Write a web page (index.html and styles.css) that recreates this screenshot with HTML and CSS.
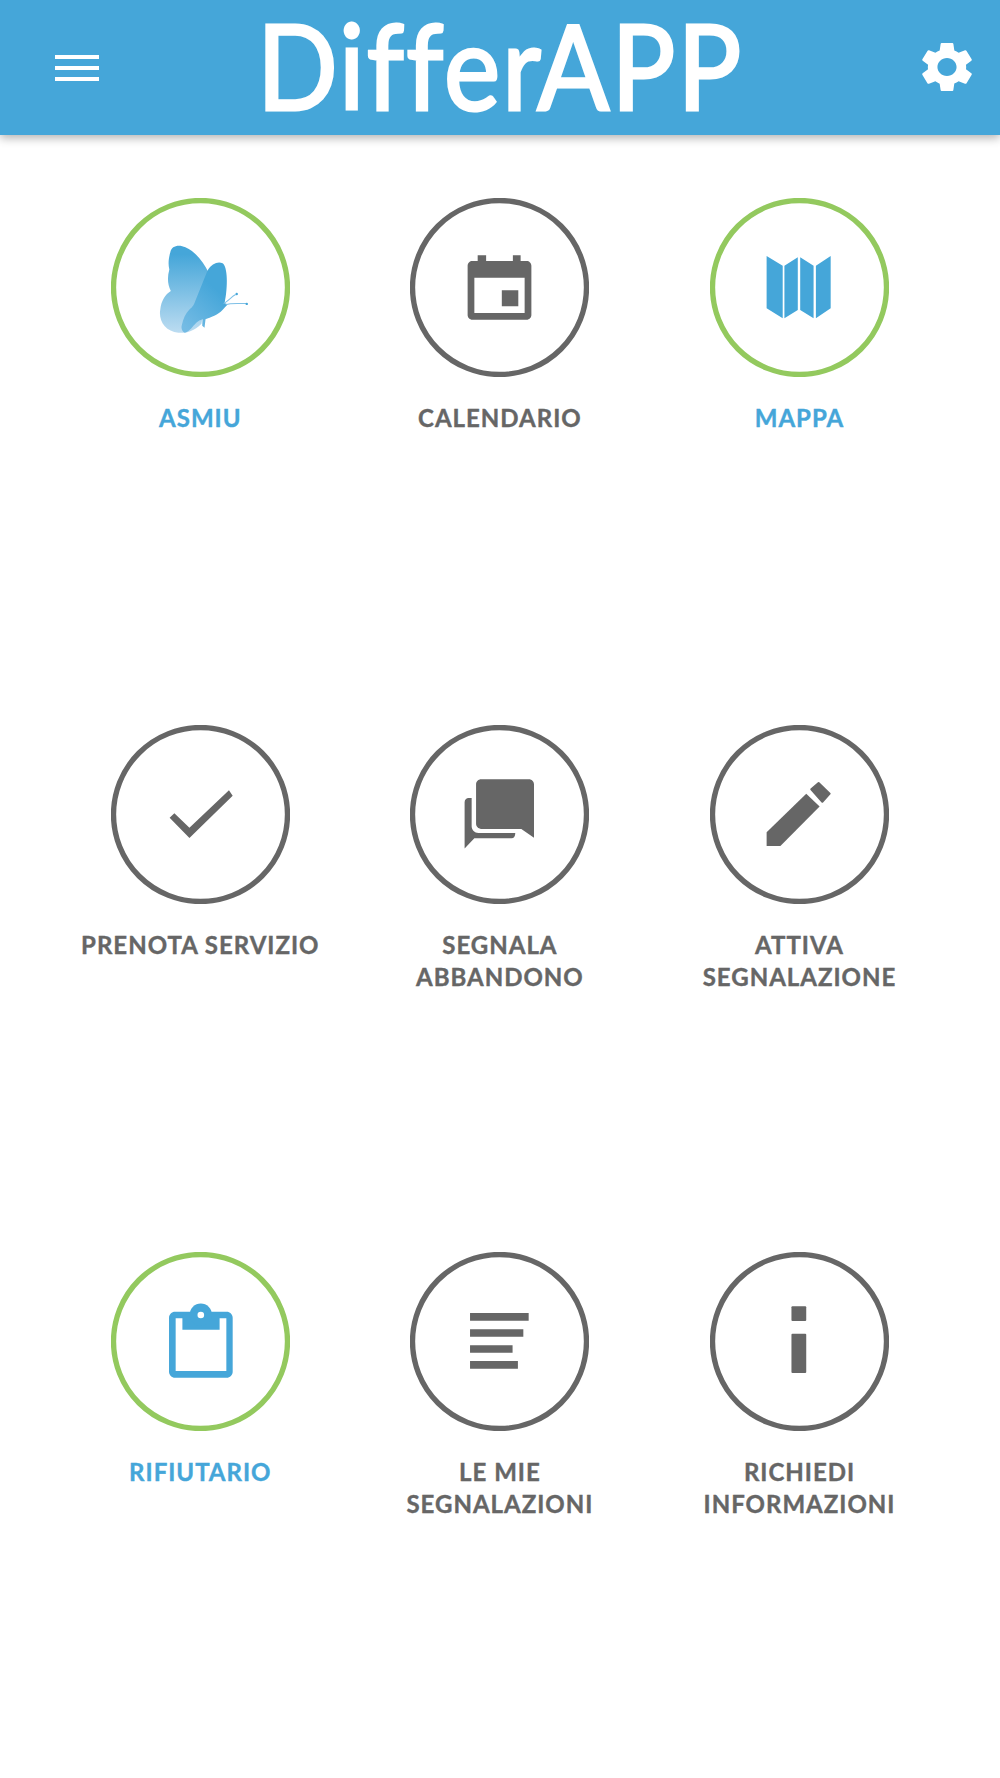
FILE: index.html
```html
<!DOCTYPE html>
<html lang="it">
<head>
<meta charset="utf-8">
<title>DifferAPP</title>
<link rel="stylesheet" href="styles.css">
</head>
<body>
<header class="topbar">
  <button class="menu" aria-label="Menu"><span></span><span></span><span></span></button>
  <h1 class="logo">DifferAPP</h1>
  <svg class="gear" viewBox="2.6 2 18.8 20" preserveAspectRatio="none"><path fill-rule="evenodd" d="M19.14 12.94c.04-.3.06-.61.06-.94 0-.32-.02-.64-.07-.94l2.03-1.58c.18-.14.23-.41.12-.61l-1.92-3.32c-.12-.22-.37-.29-.59-.22l-2.39.96c-.5-.38-1.03-.7-1.62-.94l-.36-2.54c-.04-.24-.24-.41-.48-.41h-3.84c-.24 0-.43.17-.47.41l-.36 2.54c-.59.24-1.13.57-1.62.94l-2.39-.96c-.22-.08-.47 0-.59.22L2.74 8.87c-.12.21-.08.47.12.61l2.03 1.58c-.05.3-.09.63-.09.94s.02.64.07.94l-2.03 1.58c-.18.14-.23.41-.12.61l1.92 3.32c.12.22.37.29.59.22l2.39-.96c.5.38 1.03.7 1.62.94l.36 2.54c.05.24.24.41.48.41h3.84c.24 0 .44-.17.47-.41l.36-2.54c.59-.24 1.13-.56 1.62-.94l2.39.96c.22.08.47 0 .59-.22l1.92-3.32c.12-.22.07-.47-.12-.61l-2.01-1.58zM12 15.6c-1.98 0-3.6-1.62-3.6-3.6s1.62-3.6 3.6-3.6 3.6 1.62 3.6 3.6-1.62 3.6-3.6 3.6z"/></svg>
</header>

<main class="grid">
  <a class="tile tile-on">
    <svg class="disc" viewBox="0 0 178 178">
      <defs>
        <linearGradient id="wingBack" x1="0" y1="0" x2="0" y2="1"><stop offset="0.1" stop-color="#45a6d9"/><stop offset="1" stop-color="#bcdcf1"/></linearGradient>
        <linearGradient id="wingFront" x1="0.6" y1="0.3" x2="0.2" y2="1"><stop offset="0" stop-color="#45a6d9"/><stop offset="1" stop-color="#74bbe4"/></linearGradient>
      </defs>
      <circle class="ring" cx="89" cy="89" r="86.5"/>
      <path fill="url(#wingBack)" d="M59 54C60 47 68 46 74 49C85 54 92 64 97 74L90 125C82 133 74 134.500 67 134C54 133 47 122 49 111C50 102 54 96 59.500 92.500C56 86 56 78 58 71C56.500 65 57.500 59 59 54Z"/>
      <path fill="url(#wingFront)" d="M96 72C100 65 107 62.500 111 65C116 68.500 116.500 88 113 104.500L116 106C112 110 110 113 107 114.500C102 118 97 119 94 120.500L93 129L90.700 127L91 120.500C86 122 84 125 82 127C79 131 76 133.500 73.500 134C70.500 133 69.500 129 70.500 126C72 120 74 115 78 111C80 109 82 108 84 102Z"/>
      <path class="feeler" d="M112 105C117 102 120 98 124 96M114 106C120 104 128 105 135 105"/>
      <circle class="feeler-tip" cx="125" cy="95.500" r="1.200"/>
      <circle class="feeler-tip" cx="135" cy="105.300" r="1.200"/>
    </svg>
    <span class="label">ASMIU</span>
  </a>

  <a class="tile">
    <svg class="disc" viewBox="0 0 178 178">
      <circle class="ring" cx="89" cy="89" r="86.5"/>
      <path class="fill" fill-rule="evenodd" d="M67.300 57H75.700V62.700H102.300V57H110V62.700H116C118.600 62.700 120.700 64.800 120.700 67.400V116.300C120.700 118.900 118.600 121 116 121H62C59.400 121 57.300 118.900 57.300 116.300V67.400C57.300 64.800 59.400 62.700 62 62.700H67.300ZM64 79.300V114.300H114V79.300ZM91.300 91.700H107.700V107.700H91.300Z"/>
    </svg>
    <span class="label">CALENDARIO</span>
  </a>

  <a class="tile tile-on">
    <svg class="disc" viewBox="0 0 178 178">
      <circle class="ring" cx="89" cy="89" r="86.5"/>
      <path class="fill" d="M56.300 57.700L72.300 67.300V119.700L56.300 109.700ZM74 67.300L87.300 59V111.300L74 119.700ZM89.700 59L103 67.300V119.700L89.700 111.300ZM105.300 67.300L120 57.700V109.700L105.300 119.700Z"/>
    </svg>
    <span class="label">MAPPA</span>
  </a>

  <a class="tile">
    <svg class="disc" viewBox="0 0 178 178">
      <circle class="ring" cx="89" cy="89" r="86.5"/>
      <path class="fill" d="M58.300 92.300L63 87.700L78 102.300L117.300 65L121 70.300L78 112.300Z"/>
    </svg>
    <span class="label">PRENOTA SERVIZIO</span>
  </a>

  <a class="tile">
    <svg class="disc" viewBox="0 0 178 178">
      <circle class="ring" cx="89" cy="89" r="86.5"/>
      <path class="fill" d="M70.700 54H118.300C121 54 123.300 56.300 123.300 59V112L110.700 103.300H70.700C68 103.300 65.700 101 65.700 98.300V59C65.700 56.300 68 54 70.700 54Z"/>
      <path class="fill" d="M61.300 72.700H58.300C56 72.700 54.300 74.400 54.300 76.700V122.700L64 112.700H101C103.200 112.700 104.700 110.500 104.700 107.300H68C64.300 107.300 61.300 104.300 61.300 100.600Z"/>
    </svg>
    <span class="label">SEGNALA ABBANDONO</span>
  </a>

  <a class="tile">
    <svg class="disc" viewBox="0 0 178 178">
      <circle class="ring" cx="89" cy="89" r="86.5"/>
      <path class="fill" d="M56.300 106.700L95.700 68.300L109 81L70 120.300H56.300Z"/>
      <path class="fill soft" d="M100.700 64L108 57.700L119 68.300L111.700 76.300Z"/>
    </svg>
    <span class="label">ATTIVA SEGNALAZIONE</span>
  </a>

  <a class="tile tile-on">
    <svg class="disc" viewBox="0 0 178 178">
      <circle class="ring" cx="89" cy="89" r="86.5"/>
      <path class="fill" fill-rule="evenodd" d="M63.700 59.300H115C118.300 59.300 121 62 121 65.300V119C121 122.300 118.300 125 115 125H63.700C60.400 125 57.700 122.300 57.700 119V65.300C57.700 62 60.400 59.300 63.700 59.300ZM64.300 66V118.300H114.700V66Z"/>
      <path class="fill" d="M71 62H108V77.300H71Z"/>
      <circle class="fill" cx="89.300" cy="62.300" r="11"/>
      <circle class="hole" cx="89.300" cy="62.700" r="3.300"/>
    </svg>
    <span class="label">RIFIUTARIO</span>
  </a>

  <a class="tile">
    <svg class="disc" viewBox="0 0 178 178">
      <circle class="ring" cx="89" cy="89" r="86.5"/>
      <path class="fill" d="M59.700 60.700H118V68.300H59.700ZM59.700 76.700H112.700V84.300H59.700ZM59.700 92.700H102V100.300H59.700ZM59.700 108.300H107.300V116H59.700Z"/>
    </svg>
    <span class="label">LE MIE SEGNALAZIONI</span>
  </a>

  <a class="tile">
    <svg class="disc" viewBox="0 0 178 178">
      <circle class="ring" cx="89" cy="89" r="86.5"/>
      <rect class="fill" x="81" y="54" width="14.700" height="14.700" rx="1"/>
      <rect class="fill" x="81" y="81.300" width="14.700" height="39" rx="1"/>
    </svg>
    <span class="label">RICHIEDI INFORMAZIONI</span>
  </a>
</main>
</body>
</html>
```
FILE: styles.css
```css
* { box-sizing: border-box; }
html, body { margin: 0; background: #fff; }
body { font-family: "Lato", "Open Sans", sans-serif; height: 1778px; overflow: hidden; }

.topbar {
  height: 135px;
  background: #45a6d9;
  box-shadow: 0 3px 9px rgba(0, 0, 0, .3);
  display: grid;
  grid-template-columns: 1fr auto 1fr;
  align-items: start;
  padding: 0 28px;
}
.menu {
  width: 44px;
  margin: 55px 0 0 27px;
  padding: 0;
  border: 0;
  background: none;
  display: flex;
  flex-direction: column;
  gap: 7px;
}
.menu span { display: block; height: 4px; background: #fff; }
.logo {
  margin: 0;
  font-family: "Lato", sans-serif;
  font-weight: 400;
  font-size: 118px;
  line-height: 129px;
  letter-spacing: 2.500px;
  color: #fff;
  -webkit-text-stroke: 3px #fff;
  transform: scaleX(.9);
}
.gear { width: 50px; height: 50px; margin-top: 42px; fill: #fff; justify-self: end; }

.grid {
  display: grid;
  grid-template-columns: repeat(3, 299.600px);
  grid-auto-rows: 527px;
  padding: 63px 0 0 50.500px;
}
.tile {
  display: flex;
  flex-direction: column;
  align-items: center;
  color: #666;
  --ring: #666;
  --ink: #666;
}
.tile-on { color: #45a6d9; --ring: #93c95e; --ink: #45a6d9; }
.disc { display: block; width: 179px; height: 179px; }
.ring { fill: #fff; stroke: var(--ring); stroke-width: 5.300; }
.fill { fill: var(--ink); }
.soft { stroke: var(--ink); stroke-width: 2; stroke-linejoin: round; }
.hole { fill: #fff; }
.feeler { fill: none; stroke: #7fc0e6; stroke-width: 1; }
.feeler-tip { fill: #45a6d9; }
.label {
  width: 250px;
  margin-top: 25px;
  font-size: 24px;
  font-weight: 700;
  line-height: 31.500px;
  letter-spacing: 1px;
  -webkit-text-stroke: .4px currentColor;
  text-align: center;
}
```
